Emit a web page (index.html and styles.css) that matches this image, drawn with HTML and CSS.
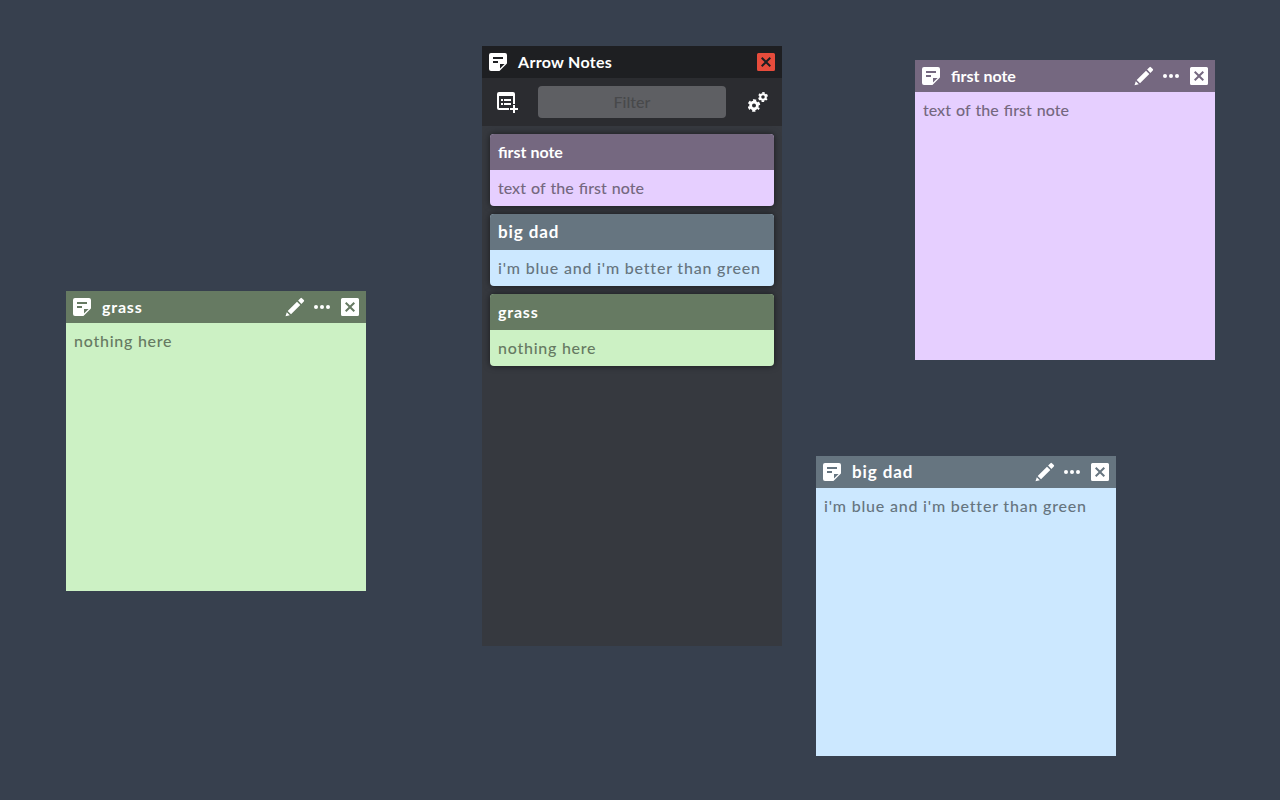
FILE: index.html
```html
<!DOCTYPE html>
<html lang="en">
<head>
<meta charset="utf-8">
<title>Arrow Notes</title>
<link rel="stylesheet" href="styles.css">
</head>
<body>
<svg class="defs" aria-hidden="true">
  <symbol id="note" viewBox="3 3 18 18"><path fill-rule="evenodd" d="M19 3H5a2 2 0 0 0-2 2v14a2 2 0 0 0 2 2h8a1 1 0 0 0 .7-.3l7-7a1 1 0 0 0 .3-.7V5a2 2 0 0 0-2-2ZM7 7H17V9H7ZM7 11H12V13H7ZM14 18.6V14H18.6Z"/></symbol>
  <symbol id="pencil" viewBox="0 0 20 20"><path d="M.5 19.3L1.8 15.2L4.8 18.2ZM2.7 14L12 4.7L15.3 8L6 17.3ZM13.1 3.6L15.5 1.2Q16.2.5 16.9 1.2L18.8 3.1Q19.5 3.8 18.8 4.5L16.4 6.9Z"/></symbol>
  <symbol id="dots" viewBox="0 0 16 4"><circle cx="2" cy="2" r="2"/><circle cx="8" cy="2" r="2"/><circle cx="14" cy="2" r="2"/></symbol>
  <symbol id="close" viewBox="0 0 18 18"><path fill-rule="evenodd" d="M1.5 0H16.5Q18 0 18 1.5V16.5Q18 18 16.5 18H1.5Q0 18 0 16.5V1.5Q0 0 1.5 0ZM5.4 4L4 5.4L7.6 9L4 12.6L5.4 14L9 10.4L12.6 14L14 12.6L10.4 9L14 5.4L12.6 4L9 7.6Z"/></symbol>
</svg>
<main class="desktop">
  <section class="window manager">
    <header class="bar">
      <svg class="note-icon"><use href="#note"/></svg>
      <h1 class="title app">Arrow Notes</h1>
      <svg class="close-icon danger"><use href="#close"/></svg>
    </header>
    <div class="tools">
      <svg class="add-icon" viewBox="0 0 21 21"><path fill-rule="evenodd" d="M2 0H16Q18 0 18 2V12H16V4H2V16H12V18H2Q0 18 0 16V2Q0 0 2 0ZM4 7H6V9H4ZM7 7H14V9H7ZM4 11H6V13H4ZM7 11H14V13H7ZM16 13H18V16H21V18H18V21H16V18H13V16H16Z"/></svg>
      <input class="filter" placeholder="Filter" aria-label="Filter">
      <svg class="gear-icon" viewBox="0 0 20 20"><g fill="none"><circle cx="6" cy="13.5" r="3.4" stroke-width="2.8"/><circle cx="6" cy="13.5" r="5.3" stroke-width="2" stroke-dasharray="3.05 2.5" stroke-dashoffset="1.52" transform="rotate(30 6 13.5)"/><circle cx="15" cy="5" r="2.8" stroke-width="2.1"/><circle cx="15" cy="5" r="4.1" stroke-width="1.7" stroke-dasharray="2.35 1.943" stroke-dashoffset="1.175" transform="rotate(30 15 5)"/></g></svg>
    </div>
    <div class="list">
      <article class="card violet"><h2 class="first">first note</h2><p class="text first-text">text of the first note</p></article>
      <article class="card blue"><h2 class="dad">big dad</h2><p class="text blue-text">i'm blue and i'm better than green</p></article>
      <article class="card green"><h2 class="grass">grass</h2><p class="text nothing">nothing here</p></article>
    </div>
  </section>
  <section class="window sticky violet at-violet">
    <header class="bar"><svg class="note-icon"><use href="#note"/></svg><h2 class="title first">first note</h2><svg class="pencil-icon"><use href="#pencil"/></svg><svg class="dots-icon"><use href="#dots"/></svg><svg class="close-icon"><use href="#close"/></svg></header>
    <p class="text first-text">text of the first note</p>
  </section>
  <section class="window sticky green at-green">
    <header class="bar"><svg class="note-icon"><use href="#note"/></svg><h2 class="title grass">grass</h2><svg class="pencil-icon"><use href="#pencil"/></svg><svg class="dots-icon"><use href="#dots"/></svg><svg class="close-icon"><use href="#close"/></svg></header>
    <p class="text nothing">nothing here</p>
  </section>
  <section class="window sticky blue at-blue">
    <header class="bar"><svg class="note-icon"><use href="#note"/></svg><h2 class="title dad">big dad</h2><svg class="pencil-icon"><use href="#pencil"/></svg><svg class="dots-icon"><use href="#dots"/></svg><svg class="close-icon"><use href="#close"/></svg></header>
    <p class="text blue-text">i'm blue and i'm better than green</p>
  </section>
</main>
</body>
</html>
```
FILE: styles.css
```css
* { box-sizing: border-box; }
body { margin: 0; font: 16px/20px Lato, "Open Sans", sans-serif; }
h1, h2, p { margin: 0; font-size: 16px; line-height: 20px; white-space: nowrap; }
.defs { position: absolute; width: 0; height: 0; }
.desktop { position: relative; width: 1280px; height: 800px; overflow: hidden; background: #37404e; }
.window { position: absolute; width: 300px; }
.manager { left: 482px; top: 46px; height: 600px; background: #36393f; }
.sticky { height: 300px; background: var(--body); }
.at-violet { left: 915px; top: 60px; }
.at-green { left: 66px; top: 291px; }
.at-blue { left: 816px; top: 456px; }
.violet { --body: #e6cfff; --head: #756880; }
.blue { --body: #cce8ff; --head: #667580; }
.green { --body: #ccf1c4; --head: #667a62; }
.bar { display: flex; align-items: center; height: 32px; padding: 0 7px; color: #fff; background: var(--head, #1e1f22); }
.bar svg { flex: none; fill: currentColor; }
.title { flex: 1; margin-left: 11px; }
.note-icon, .close-icon { width: 18px; height: 18px; }
.bar .danger { color: #e74c3c; }
.pencil-icon { width: 20px; height: 20px; }
.dots-icon { width: 16px; height: 4px; margin: 0 11px 0 9px; }
.tools { display: flex; align-items: center; height: 48px; padding: 0 14px 0 15px; background: #2b2c30; }
.add-icon { width: 21px; height: 21px; margin-right: 20px; fill: #fff; }
.gear-icon { width: 20px; height: 20px; margin-left: auto; stroke: #fff; }
.filter { width: 188px; height: 32px; padding: 0 0 2px; border: 0; border-radius: 4px; background: #5e5f63; font: 500 16px Lato, sans-serif; text-align: center; }
.filter::placeholder { color: #48494b; opacity: 1; }
.list { display: grid; gap: 8px; padding: 8px; }
.card { overflow: hidden; border-radius: 4px; background: var(--body); box-shadow: 0 0 6px rgba(0, 0, 0, .55); }
.card h2 { height: 36px; padding: 8px; color: #fff; background: var(--head); }
.text { height: 36px; padding: 8px; color: var(--head); font-weight: 500; }
.app { letter-spacing: .3px; }
.dad { font-size: 17px; letter-spacing: .9px; }
.grass { letter-spacing: .8px; }
.first-text { word-spacing: 1.1px; }
.blue-text { letter-spacing: .8px; }
.nothing { letter-spacing: .75px; }
```
